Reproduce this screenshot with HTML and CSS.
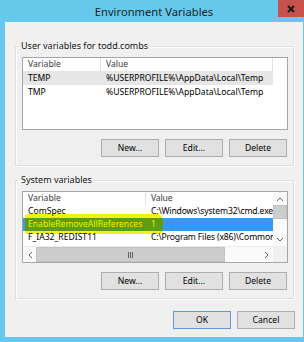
FILE: index.html
```html
<!DOCTYPE html>
<html lang="en">
<head>
  <meta charset="UTF-8">
  <title>Environment Variables</title>
  <link rel="stylesheet" href="styles.css">
</head>
<body>
  <div class="window">
    <div class="titlebar">
      <span class="title">Environment Variables</span>
      <span class="close">
        <svg width="8" height="8" viewBox="0 0 8 8"><path d="M1 1 L7 7 M7 1 L1 7" stroke="#1a1a1a" stroke-width="2"/></svg>
      </span>
    </div>

    <div class="client">
      <fieldset class="group">
        <legend>User variables for todd.combs</legend>
        <div class="list">
          <div class="row head user-cols">
            <span class="cell">Variable</span>
            <span class="cell">Value</span>
          </div>
          <div class="row body-row user-cols inactive">
            <span class="cell">TEMP</span>
            <span class="cell">%USERPROFILE%\AppData\Local\Temp</span>
          </div>
          <div class="row body-row user-cols">
            <span class="cell">TMP</span>
            <span class="cell">%USERPROFILE%\AppData\Local\Temp</span>
          </div>
        </div>
        <div class="btns">
          <button>New...</button>
          <button>Edit...</button>
          <button>Delete</button>
        </div>
      </fieldset>

      <fieldset class="group second">
        <legend>System variables</legend>
        <div class="list sys">
          <div class="rows">
            <div class="marker"></div>
            <div class="row head sys-cols">
              <span class="cell">Variable</span>
              <span class="cell">Value</span>
            </div>
            <div class="row body-row sys-cols short">
              <span class="cell">ComSpec</span>
              <span class="cell">C:\Windows\system32\cmd.exe</span>
            </div>
            <div class="row body-row sys-cols short selected">
              <span class="cell">EnableRemoveAllReferences</span>
              <span class="cell">1</span>
            </div>
            <div class="row body-row sys-cols short">
              <span class="cell">F_IA32_REDIST11</span>
              <span class="cell">C:\Program Files (x86)\Common</span>
            </div>
          </div>
          <div class="vscroll">
            <span class="arrow">
              <svg width="8" height="6" viewBox="0 0 8 6"><polyline points="1,5 4,2 7,5" fill="none" stroke="#606060"/></svg>
            </span>
            <span class="vthumb"></span>
            <span class="track"></span>
            <span class="arrow">
              <svg width="8" height="6" viewBox="0 0 8 6"><polyline points="1,1 4,4 7,1" fill="none" stroke="#606060"/></svg>
            </span>
          </div>
          <div class="hscroll">
            <span class="arrow">
              <svg width="6" height="8" viewBox="0 0 6 8"><polyline points="5,1 2,4 5,7" fill="none" stroke="#606060"/></svg>
            </span>
            <span class="hthumb">
              <svg width="7" height="6" viewBox="0 0 7 6"><path d="M1.5 0 V6 M3.5 0 V6 M5.5 0 V6" stroke="#606060"/></svg>
            </span>
            <span class="track"></span>
            <span class="arrow">
              <svg width="6" height="8" viewBox="0 0 6 8"><polyline points="1,1 4,4 1,7" fill="none" stroke="#606060"/></svg>
            </span>
          </div>
          <div class="corner"></div>
        </div>
        <div class="btns">
          <button>New...</button>
          <button>Edit...</button>
          <button>Delete</button>
        </div>
      </fieldset>

      <div class="btns dialog">
        <button class="default">OK</button>
        <button>Cancel</button>
      </div>
    </div>
  </div>
</body>
</html>
```

FILE: styles.css
```css
* {
  box-sizing: border-box;
}

body {
  margin: 0;
  width: 304px;
  height: 342px;
  overflow: hidden;
  background: #66c9ec;
  font-family: "Noto Sans", sans-serif;
  font-size: 8.6px;
  color: #000;
}

.window {
  display: flex;
  flex-direction: column;
  height: 342px;
}

.titlebar {
  position: relative;
  height: 22px;
  display: flex;
  align-items: center;
  justify-content: center;
  padding-left: 4px;
  font-size: 11.2px;
  color: #1a1f26;
}

.close {
  position: absolute;
  top: 0;
  right: 0;
  width: 26px;
  height: 17px;
  background: #c7514d;
  display: flex;
  align-items: center;
  justify-content: center;
}

.client {
  margin: 0 1px 0 5px;
  height: 315px;
  background: #f0f0f0;
  padding-top: 17px;
}

.group {
  margin: 0 9px 0 10px;
  padding: 4px 5px 8px 6px;
  border: 1px solid #d8e0e5;
  box-shadow: inset 1px 1px 0 #fff, 1px 1px 0 #fff;
  min-width: 0;
}

.group.second {
  margin-top: 7px;
}

legend {
  padding: 0 2px;
  margin-left: -3px;
  line-height: 14px;
  font-size: 9px;
  color: #111;
}

.list {
  height: 73px;
  background: #fff;
  border: 1px solid #a5a5a5;
  overflow: hidden;
}

.row {
  position: relative;
  display: flex;
  height: 14px;
  line-height: 14px;
  white-space: nowrap;
}

.row.head {
  height: 13px;
  line-height: 13px;
  color: #3c3c3c;
}

.row.short {
  height: 13px;
  line-height: 13px;
}

.cell {
  padding-left: 5px;
  overflow: hidden;
  flex-shrink: 0;
}

.head .cell {
  border-right: 1px solid #e3e3e3;
}

.user-cols {
  width: 250px;
}

.user-cols .cell:first-child {
  width: 78px;
}

.user-cols .cell:last-child {
  width: 172px;
}

.sys-cols .cell:first-child {
  width: 123px;
}

.sys-cols .cell:last-child {
  width: 180px;
  letter-spacing: -0.15px;
}

.inactive {
  background: #e6e6e6;
}

/* selected row, painted over by a yellow highlighter stroke */
.selected {
  background: linear-gradient(to right, #3399ff 2px, #5c9d14 2px, #5c9d14 140px, #3399ff 140px);
  color: #eef200;
}

.list.sys {
  height: 72px;
  display: grid;
  grid-template-columns: 1fr 14px;
  grid-template-rows: 54px 16px;
}

.rows {
  position: relative;
  overflow: hidden;
}

.marker {
  position: absolute;
  left: 2px;
  top: 22px;
  width: 138px;
  height: 20px;
  background: #eef21a;
  border-radius: 3px 6px 4px 2px;
}

.vscroll {
  display: flex;
  flex-direction: column;
  background: #fafafa;
}

.vscroll .arrow {
  height: 13px;
  display: flex;
  align-items: center;
  justify-content: center;
}

.vthumb {
  height: 14px;
  background: #cdcdcd;
  border: 1px solid #c2c2c2;
}

.track {
  flex: 1;
}

.hscroll {
  display: flex;
  background: #fafafa;
  border-top: 1px solid #ececec;
}

.hscroll .arrow {
  width: 13px;
  display: flex;
  align-items: center;
  justify-content: center;
}

.hthumb {
  width: 189px;
  background: #cdcdcd;
  border: 1px solid #c2c2c2;
  display: flex;
  align-items: center;
  justify-content: center;
}

.corner {
  background: #f0f0f0;
}

.btns {
  display: flex;
  justify-content: flex-end;
  gap: 6px;
  margin-top: 9px;
  padding-right: 1px;
}

.btns.dialog {
  margin: 12px 8px 0 0;
  padding: 0;
}

button {
  width: 58px;
  height: 18px;
  padding: 0;
  font: inherit;
  color: #000;
  background: #e1e1e1;
  border: 1px solid #adadad;
  border-radius: 0;
}

button.default {
  border-color: #5a9bd8;
}
```
